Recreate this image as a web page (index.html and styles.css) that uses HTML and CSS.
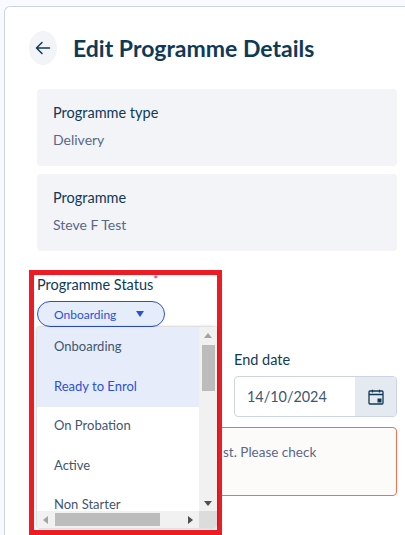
FILE: index.html
```html
<!DOCTYPE html>
<html lang="en">
<head>
  <meta charset="UTF-8">
  <meta name="viewport" content="width=device-width, initial-scale=1">
  <title>Edit Programme Details</title>
  <link rel="stylesheet" href="styles.css">
</head>
<body>
  <main class="card">
    <header class="page-head">
      <button class="back-btn" type="button" aria-label="Back">
        <svg width="16" height="16" viewBox="0 0 16 16" fill="none" stroke="#0f3a57" stroke-width="1.5" stroke-linecap="round" stroke-linejoin="round">
          <path d="M14.5 8H1.5M7 2.5 1.5 8 7 13.5"/>
        </svg>
      </button>
      <h1 class="page-title">Edit Programme Details</h1>
    </header>

    <section class="info-panel">
      <h2 class="info-label">Programme type</h2>
      <p class="info-value">Delivery</p>
    </section>

    <section class="info-panel">
      <h2 class="info-label">Programme</h2>
      <p class="info-value">Steve F Test</p>
    </section>

    <div class="status-field">
      <label class="field-label">Programme Status<sup class="required">*</sup></label>
      <button class="status-pill" type="button">
        <span>Onboarding</span>
        <span class="pill-caret"></span>
      </button>
    </div>

    <div class="date-row">
      <div class="date-field">
        <label class="field-label">End date</label>
        <div class="date-input">
          <span class="date-value">14/10/2024</span>
          <span class="date-btn">
            <svg width="16" height="16" viewBox="0 0 16 16" fill="none">
              <rect x="1" y="2" width="14" height="13" rx="1" stroke="#0f3a57" stroke-width="1.3"/>
              <path d="M1 5.5h14M4.5 .8v2.6M11.5 .8v2.6" stroke="#0f3a57" stroke-width="1.3"/>
              <rect x="9.5" y="9.5" width="4" height="4" fill="#0f3a57"/>
            </svg>
          </span>
        </div>
      </div>
    </div>

    <div class="alert">st. Please check</div>
  </main>

  <div class="highlight-box">
    <div class="dropdown">
      <ul class="dropdown-list">
        <li class="option option-hover">Onboarding</li>
        <li class="option option-selected">Ready to Enrol</li>
        <li class="option">On Probation</li>
        <li class="option">Active</li>
        <li class="option option-last">Non Starter</li>
      </ul>
      <div class="scroll-v">
        <span class="arrow arrow-up"></span>
        <span class="thumb-v"></span>
        <span class="arrow arrow-down"></span>
      </div>
      <div class="scroll-h">
        <span class="arrow arrow-left"></span>
        <span class="thumb-h"></span>
        <span class="arrow arrow-right"></span>
      </div>
      <div class="scroll-corner"></div>
    </div>
  </div>
</body>
</html>
```

FILE: styles.css
```css
html,
body {
  height: 535px;
  overflow: hidden;
}

body {
  background-color: #f9faff;
  color: #0f3a57;
  font-family: Lato, "Open Sans", sans-serif;
  margin: 0;
  position: relative;
}

.card {
  background-color: #fff;
  border-top: 1px solid #ccd5e8;
  border-left: 1px solid #ccd5e8;
  border-top-left-radius: 6px;
  height: 529px;
  margin: 6px 0 0 4px;
  padding: 24px 8px 0 24px;
  box-sizing: border-box;
}

.page-head {
  align-items: center;
  display: flex;
  gap: 16px;
  height: 34px;
  margin-bottom: 24px;
}

.back-btn {
  align-items: center;
  background-color: #f2f4f8;
  border: none;
  border-radius: 50%;
  display: flex;
  height: 34px;
  justify-content: center;
  padding: 0;
  width: 28px;
}

.page-title {
  font-size: 23px;
  font-weight: 700;
  margin: 0;
}

.info-panel {
  background-color: #f2f4f8;
  border-radius: 4px;
  box-sizing: border-box;
  height: 77px;
  margin: 0 0 8px 8px;
  padding: 14px 16px;
}

.info-label {
  font-size: 14.5px;
  font-weight: 400;
  line-height: 20px;
  margin: 0 0 7px;
}

.info-value {
  color: #5a6788;
  font-size: 14px;
  line-height: 20px;
  margin: 0;
}

.status-field {
  margin: 24px 0 0 8px;
}

.field-label {
  display: block;
  font-size: 14.5px;
  font-weight: 400;
  line-height: 20px;
}

.required {
  color: #e6266e;
  font-size: 12px;
  line-height: 0;
}

.status-pill {
  align-items: center;
  background-color: #e6edfa;
  border: 1.5px solid #2b50d8;
  border-radius: 13px;
  box-sizing: border-box;
  color: #2b50d8;
  display: flex;
  font-family: inherit;
  font-size: 12px;
  height: 26px;
  justify-content: space-between;
  margin-top: 6px;
  padding: 0 20px 0 16px;
  width: 128px;
}

.pill-caret {
  border-left: 4px solid transparent;
  border-right: 4px solid transparent;
  border-top: 6px solid #2b50d8;
}

.date-row {
  display: flex;
  justify-content: flex-end;
  margin-top: 23px;
}

.date-field {
  width: 163px;
}

.date-input {
  background-color: #fff;
  border: 1px solid #ccd5e8;
  border-radius: 4px;
  box-sizing: border-box;
  display: flex;
  height: 41px;
  margin-top: 6px;
  overflow: hidden;
}

.date-value {
  align-self: center;
  color: #3f5670;
  flex: 1;
  font-size: 14.4px;
  padding-left: 12px;
}

.date-btn {
  align-items: center;
  background-color: #e5e9f0;
  display: flex;
  justify-content: center;
  width: 41px;
}

.alert {
  background-color: #fdfbfa;
  border: 1px solid #f0704f;
  border-radius: 4px;
  box-sizing: border-box;
  color: #5a6788;
  font-size: 13.5px;
  height: 69px;
  line-height: 20px;
  margin: 10px 0 0 8px;
  padding: 14px 0 0 185px;
}

/* red annotation drawn over the page */
.highlight-box {
  border: 5px solid #ed1c24;
  box-sizing: border-box;
  height: 265px;
  left: 29px;
  position: absolute;
  top: 270px;
  width: 193px;
}

.dropdown {
  background-color: #fff;
  border-radius: 3px;
  box-shadow: 0 0 3px rgba(0, 0, 0, .35);
  display: grid;
  grid-template-columns: 162px 18px;
  grid-template-rows: 184px 17px;
  left: 3px;
  overflow: hidden;
  position: absolute;
  top: 52px;
  width: 180px;
}

.dropdown-list {
  list-style: none;
  margin: 0;
  overflow: hidden;
  padding: 0;
}

.option {
  color: #3f5670;
  font-size: 13px;
  height: 39.6px;
  line-height: 36px;
  padding-left: 17px;
}

.option-hover,
.option-selected {
  background-color: #e6ecf9;
  height: 40px;
  line-height: 38px;
}

.option-selected {
  color: #2b50d8;
}

/* cut short, the list scrolls on below the bar */
.option-last {
  box-sizing: border-box;
  height: 25px;
  line-height: 14px;
  padding-top: 11px;
}

.scroll-v {
  align-items: center;
  background-color: #f1f1f1;
  display: flex;
  flex-direction: column;
  padding: 6px 0 5px;
}

.thumb-v {
  background-color: #bcbcbc;
  height: 46px;
  margin-top: 7px;
  width: 13px;
}

.scroll-h {
  align-items: center;
  background-color: #f1f1f1;
  display: flex;
  padding-left: 6px;
}

.thumb-h {
  background-color: #bcbcbc;
  height: 13px;
  margin-left: 7px;
  width: 105px;
}

.scroll-corner {
  background-color: #dcdcdc;
}

.arrow {
  display: block;
  height: 0;
  width: 0;
}

.arrow-up {
  border-bottom: 5px solid #a3a3a3;
  border-left: 4px solid transparent;
  border-right: 4px solid transparent;
}

.arrow-down {
  border-left: 4px solid transparent;
  border-right: 4px solid transparent;
  border-top: 5px solid #505050;
  margin-top: auto;
}

.arrow-left {
  border-bottom: 4px solid transparent;
  border-right: 5px solid #a3a3a3;
  border-top: 4px solid transparent;
}

.arrow-right {
  border-bottom: 4px solid transparent;
  border-left: 5px solid #505050;
  border-top: 4px solid transparent;
  margin-left: 28px;
}
```
